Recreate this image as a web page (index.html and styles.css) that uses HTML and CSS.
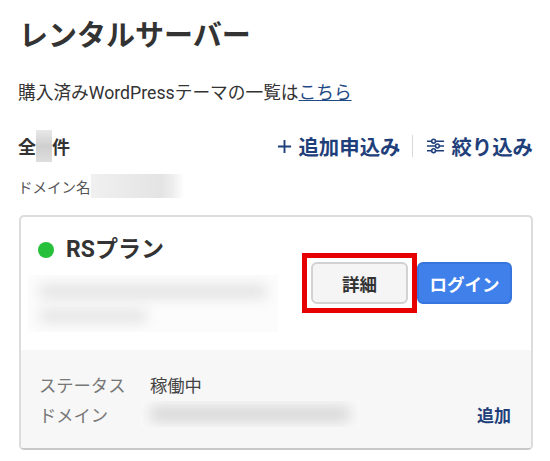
FILE: index.html
```html
<!DOCTYPE html>
<html lang="ja">
<head>
<meta charset="utf-8">
<title>レンタルサーバー</title>
<link rel="stylesheet" href="styles.css">
</head>
<body>
<h1 class="title">レンタルサーバー</h1>
<p class="intro">購入済みWordPressテーマの一覧は<a class="intro-link" href="#">こちら</a></p>
<div class="summary">
  <div class="count">全<span class="count-mask"></span>件</div>
  <div class="actions">
    <a class="action" href="#">
      <svg class="icon-plus" viewBox="0 0 16 16" aria-hidden="true"><path d="M8 1v14M1 8h14"/></svg>追加申込み</a>
    <span class="divider"></span>
    <a class="action" href="#">
      <svg class="icon-filter" viewBox="0 0 20 16" aria-hidden="true">
        <path d="M1 3h5M10 3h9M1 8h9M14 8h5M1 13h5M10 13h9"/>
        <circle cx="8" cy="3" r="2"/><circle cx="12" cy="8" r="2"/><circle cx="8" cy="13" r="2"/>
      </svg>絞り込み</a>
  </div>
</div>
<div class="domain-line">ドメイン名<span class="domain-mask"></span></div>
<section class="card">
  <div class="card-top">
    <div class="plan">
      <div class="plan-name"><span class="status-dot"></span>RSプラン</div>
      <div class="plan-mask">
        <span class="mask-line mask-long"></span>
        <span class="mask-line mask-short"></span>
      </div>
    </div>
    <div class="buttons">
      <div class="highlight">
        <a class="btn btn-detail" href="#">詳細</a>
      </div>
      <a class="btn btn-login" href="#">ログイン</a>
    </div>
  </div>
  <div class="card-bottom">
    <div class="row">
      <span class="label">ステータス</span>
      <span class="value">稼働中</span>
    </div>
    <div class="row">
      <span class="label">ドメイン</span>
      <span class="value-mask"><span class="value-mask-line"></span></span>
      <a class="add" href="#">追加</a>
    </div>
  </div>
</section>
</body>
</html>
```
FILE: styles.css
```css
* { box-sizing: border-box; }
html, body { margin: 0; padding: 0; background: #fff; }
body {
  width: 550px;
  height: 461px;
  overflow: hidden;
  padding: 17px 18px 0;
  font-family: Roboto, "Noto Sans CJK JP", sans-serif;
  color: #333;
}
.title {
  margin: 0 0 0 1px;
  font-size: 29px;
  line-height: 38px;
  font-weight: 700;
  color: #333;
}
.intro {
  margin: 25px 0 0;
  font-size: 17.7px;
  line-height: 26px;
  color: #333;
}
.intro-link { color: #1f4a86; text-decoration: underline; }
.summary {
  display: flex;
  justify-content: space-between;
  align-items: center;
  margin-top: 24px;
  height: 32px;
}
.count {
  display: flex;
  align-items: center;
  font-size: 18px;
  font-weight: 700;
  color: #333;
}
.count-mask {
  width: 16px;
  height: 32px;
  background: linear-gradient(#e8e8e8, #cfcfcf 50%, #dedede);
}
.actions { display: flex; align-items: center; margin-right: -1px; }
.action {
  display: flex;
  align-items: center;
  font-size: 20.4px;
  font-weight: 700;
  color: #1f3f7a;
  text-decoration: none;
  white-space: nowrap;
}
.icon-plus {
  width: 15px;
  height: 15px;
  margin-right: 6px;
  fill: none;
  stroke: #1f3f7a;
  stroke-width: 2;
}
.icon-filter {
  width: 19px;
  height: 16px;
  margin-right: 6px;
  fill: #fff;
  stroke: #1f3f7a;
  stroke-width: 1.6;
}
.divider {
  width: 1px;
  height: 22px;
  margin: 0 13px 0 12px;
  background: #d8d8d8;
}
.domain-line {
  display: flex;
  align-items: center;
  margin-top: 12px;
  height: 24px;
  font-size: 14.5px;
  color: #555;
}
.domain-mask {
  width: 93px;
  height: 24px;
  background: linear-gradient(90deg, #f0f0f0, #e4e4e4 75%, #eee 88%, #fff);
}
.card {
  margin: 17px 0 0 1px;
  width: 514px;
  height: 235px;
  border: 2px solid #dcdcdc;
  border-bottom-color: #c8c8c8;
  border-radius: 5px;
  overflow: hidden;
  background: #fff;
  display: flex;
  flex-direction: column;
}
.card-top {
  flex: none;
  height: 133px;
  display: flex;
  justify-content: space-between;
  padding: 19px 19px 0 17px;
}
.plan { width: 260px; }
.plan-name {
  display: flex;
  align-items: center;
  font-size: 23px;
  line-height: 28px;
  font-weight: 700;
  color: #333;
}
.status-dot {
  width: 16px;
  height: 16px;
  margin-right: 12px;
  border-radius: 50%;
  background: #27c03a;
}
.plan-mask {
  display: flex;
  flex-direction: column;
  gap: 14px;
  margin: 11px 0 0 -10px;
  padding: 11px 12px;
  width: 250px;
  height: 57px;
  overflow: hidden;
  background: #fcfcfc;
}
.mask-line {
  display: block;
  height: 16px;
  background: #dcdcdc;
  filter: blur(7px);
}
.mask-long { width: 226px; }
.mask-short { width: 106px; height: 14px; }
.buttons {
  display: flex;
  align-items: center;
  align-self: flex-start;
  margin-top: 17px;
}
.highlight {
  border: 5px solid #e60000;
  padding: 4px;
  width: 115px;
  height: 60px;
}
.btn {
  display: flex;
  align-items: center;
  justify-content: center;
  height: 42px;
  border-radius: 6px;
  font-size: 17.5px;
  font-weight: 700;
  text-decoration: none;
}
.btn-detail {
  width: 97px;
  background: #f5f5f5;
  border: 2.5px solid #d2d2d2;
  color: #333;
}
.btn-login {
  width: 95px;
  background: #3f80ea;
  border: 2px solid #3675de;
  color: #fff;
}
.card-bottom {
  flex: 1;
  background: #f7f7f8;
  padding: 19px 20px 0 18px;
}
.row {
  display: flex;
  align-items: center;
  height: 30px;
  font-size: 17.3px;
}
.label { width: 111px; color: #777; }
.value { color: #444; }
.value-mask {
  width: 220px;
  height: 26px;
  overflow: hidden;
  display: block;
  padding: 5px 10px;
  margin-left: -10px;
  background: #fafafa;
}
.value-mask-line {
  display: block;
  height: 16px;
  background: #d6d6d6;
  filter: blur(7px);
}
.add {
  margin-left: auto;
  font-size: 17px;
  font-weight: 700;
  color: #1f3f7a;
  text-decoration: none;
}
```
